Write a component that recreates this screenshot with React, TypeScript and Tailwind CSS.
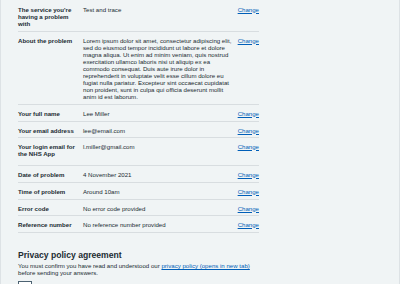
import React from "react";

type Row = { label: string; value: string; pb: string; lpr?: string };

const rows: Row[] = [
  { label: "The service you're having a problem with", value: "Test and trace", pb: "pb-[4.5px]", lpr: "pr-[6px]" },
  {
    label: "About the problem",
    value:
      "Lorem ipsum dolor sit amet, consectetur adipiscing elit, sed do eiusmod tempor incididunt ut labore et dolore magna aliqua. Ut enim ad minim veniam, quis nostrud exercitation ullamco laboris nisi ut aliquip ex ea commodo consequat. Duis aute irure dolor in reprehenderit in voluptate velit esse cillum dolore eu fugiat nulla pariatur. Excepteur sint occaecat cupidatat non proident, sunt in culpa qui officia deserunt mollit anim id est laborum.",
    pb: "pb-[4.5px]",
  },
  { label: "Your full name", value: "Lee Miller", pb: "pb-[4.5px]" },
  { label: "Your email address", value: "lee@email.com", pb: "pb-[3.5px]" },
  { label: "Your login email for the NHS App", value: "l.miller@gmail.com", pb: "pb-[8.5px]" },
  { label: "Date of problem", value: "4 November 2021", pb: "pb-[4.5px]" },
  { label: "Time of problem", value: "Around 10am", pb: "pb-[4.5px]" },
  { label: "Error code", value: "No error code provided", pb: "pb-[3.5px]" },
  { label: "Reference number", value: "No reference number provided", pb: "pb-[4.5px]" },
];

export default function App() {
  return (
    <div
      className="w-[400px] h-[284px] overflow-hidden bg-[#f0f4f5] text-[#212b32] border-l border-r border-[#dde2e5]"
      style={{ fontFamily: '"Liberation Sans", Arial, sans-serif' }}
    >
      <div className="pl-[17px] w-[258px] pt-[1px]">
        {rows.map((r, i) => (
          <div
            key={i}
            className={`flex border-b border-[#d8dde0] pt-[4.5px] ${r.pb} text-[6.1px] leading-[7px]`}
          >
            <div className={`w-[65px] shrink-0 ${r.lpr ?? "pr-0"} font-bold`}>{r.label}</div>
            <div className="w-[152px] shrink-0">{r.value}</div>
            <div className="flex-1 text-right">
              <a className="text-[#005eb8] underline">Change</a>
            </div>
          </div>
        ))}
        <h2 className="mt-[17px] text-[8.6px] leading-[10px] font-bold">Privacy policy agreement</h2>
        <p className="mt-[2px] text-[6.1px] leading-[7px] w-[236px]">
          You must confirm you have read and understood our{" "}
          <a className="text-[#005eb8] underline">privacy policy (opens in new tab)</a> before sending your answers.
        </p>
        <div className="mt-[5px] flex items-start gap-[3px]">
          <div className="w-[14px] h-[14px] border border-[#4c6272] bg-white shrink-0" />
          <span className="text-[6.1px] leading-[7px] pt-[2px]">I have read and understood the privacy policy</span>
        </div>
      </div>
    </div>
  );
}
